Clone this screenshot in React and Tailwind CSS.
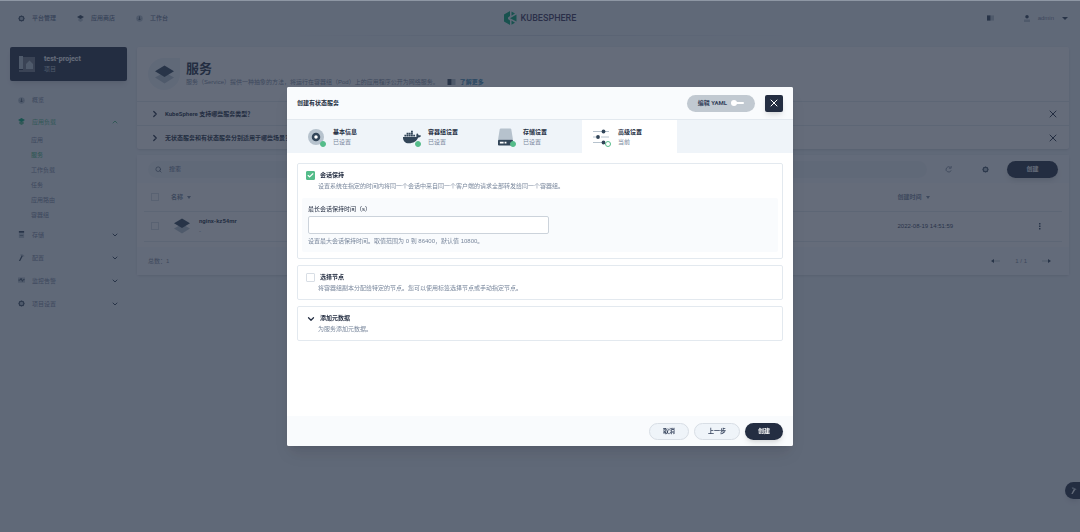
import { useState } from "react";
import { FaDocker } from "react-icons/fa";
import { Check, ChevronDown, ChevronRight, ChevronUp, Search, X } from "lucide-react";

function LayersIcon({ className }) {
  return (
    <svg viewBox="0 0 16 16" className={className} aria-hidden="true">
      <path d="M0 10.6 8 6l8 4.6-8 4.9z" fill="#b6c2cd" />
      <path d="M0 5.3 8 .5l8 4.8-8 4.7z" fill="#324558" />
    </svg>
  );
}

function GearIcon({ className }) {
  return (
    <svg viewBox="0 0 16 16" className={className} aria-hidden="true">
      <path
        d="M6.5 1h3l.5 1.9 1.7-.9 2.2 2.2-.9 1.7 2 .6v3l-2 .6.9 1.7-2.2 2.2-1.7-.9-.5 1.9h-3L6 13.1l-1.7.9-2.2-2.2.9-1.7-2-.6v-3l2-.6-.9-1.7L4.3 2l1.7.9z"
        fill="#324558"
      />
      <circle cx="8" cy="8" r="4" fill="#b6c2cd" />
    </svg>
  );
}

function StoreIcon({ className, active }) {
  return (
    <svg viewBox="0 0 16 16" className={className} aria-hidden="true">
      <path d="M3 8h10v5l-5 3-5-3z" fill={active ? "#55bc8a" : "#b6c2cd"} />
      <path d="M0 4.5 8 0l8 4.5L8 9z" fill={active ? "#00aa72" : "#324558"} />
    </svg>
  );
}

function DashboardIcon({ className }) {
  return (
    <svg viewBox="0 0 16 16" className={className} aria-hidden="true">
      <circle cx="8" cy="8" r="7.5" fill="#b6c2cd" />
      <path d="M8 3v8M5 8.5l3 3 3-3" stroke="#324558" strokeWidth="1.6" fill="none" />
    </svg>
  );
}

function StorageIcon({ className }) {
  return (
    <svg viewBox="0 0 16 16" className={className} aria-hidden="true">
      <path d="M2 5h12v11H2z" fill="#b6c2cd" />
      <path d="M2 0h12v4H2zM4 9h8v1H4z" fill="#324558" />
    </svg>
  );
}

function HammerIcon({ className }) {
  return (
    <svg viewBox="0 0 16 16" className={className} aria-hidden="true">
      <path d="M5 1c5-1 8 0 10 4l-2 1-3-2H6z" fill="#b6c2cd" />
      <path d="M8.500 3 11 4.500 5 16H2z" fill="#324558" />
    </svg>
  );
}

function MonitorIcon({ className }) {
  return (
    <svg viewBox="0 0 16 16" className={className} aria-hidden="true">
      <path d="M0 1h16v12H0z" fill="#b6c2cd" />
      <path d="M1 7h4l2-4 3 7 2-4h3" stroke="#324558" strokeWidth="2" fill="none" />
    </svg>
  );
}

function BookIcon({ className }) {
  return (
    <svg viewBox="0 0 16 12" className={className} aria-hidden="true">
      <path d="M8 0h8v12H8z" fill="#b6c2cd" />
      <path d="M0 0h8v12H0z" fill="#324558" />
    </svg>
  );
}

function ProjectIcon({ className }) {
  return (
    <svg viewBox="0 0 16 16" className={className} aria-hidden="true">
      <path d="M4 1h12v15H0v-2h4z" fill="#ffffff" opacity=".35" />
      <path d="M0 0h4v13H0zM7 8l3.500-3.500L14 8v5H7z" fill="#b6c2cd" />
    </svg>
  );
}

function DiscIcon({ className }) {
  return (
    <svg viewBox="0 0 16 16" className={className} aria-hidden="true">
      <circle cx="8" cy="8" r="8" fill="#b6c2cd" />
      <circle cx="8" cy="8" r="3" fill="#ffffff" stroke="#324558" strokeWidth="2.500" />
    </svg>
  );
}

function DiskIcon({ className }) {
  return (
    <svg viewBox="0 0 16 18" className={className} aria-hidden="true">
      <path d="M3 0h10q1 0 1.200 1L16 12H0L1.800 1Q2 0 3 0z" fill="#b6c2cd" />
      <path d="M1 12h14q1 0 1 1v4q0 1-1 1H1q-1 0-1-1v-4q0-1 1-1z" fill="#324558" />
      <path d="M2 14h4v2H2zM7 14h2v2H7z" fill="#ffffff" />
    </svg>
  );
}

function SlidersIcon({ className }) {
  return (
    <svg viewBox="0 0 16 16" className={className} aria-hidden="true">
      <path d="M0 2.500h16M0 8h6M8 8h8M0 13.500h11" stroke="#b6c2cd" strokeWidth="1" />
      <circle cx="10.500" cy="2.500" r="1.900" fill="#324558" />
      <circle cx="5" cy="8" r="1.900" fill="#324558" />
      <circle cx="10.500" cy="13.500" r="1.900" fill="#324558" />
    </svg>
  );
}

const topLinks = [
  { label: "平台管理", Icon: GearIcon },
  { label: "应用商店", Icon: StoreIcon },
  { label: "工作台", Icon: DashboardIcon },
];

const workloads = ["应用", "服务", "工作负载", "任务", "应用路由", "容器组"];

const groups = [
  { label: "存储", Icon: StorageIcon },
  { label: "配置", Icon: HammerIcon },
  { label: "监控告警", Icon: MonitorIcon },
  { label: "项目设置", Icon: GearIcon },
];

const steps = [
  { title: "基本信息", state: "已设置", Icon: DiscIcon, size: "size-4" },
  { title: "容器组设置", state: "已设置", Icon: FaDocker, size: "size-[18px]" },
  { title: "存储设置", state: "已设置", Icon: DiskIcon, size: "w-[15px] h-[18px]" },
  { title: "高级设置", state: "当前", Icon: SlidersIcon, size: "size-4", current: true },
];

function Header() {
  return (
    <header className="relative flex h-[36px] items-center justify-between pl-[18px] pr-3">
      <nav className="flex gap-[21px]">
        {topLinks.map(({ label, Icon }) => (
          <a key={label} href="#" className="flex items-center gap-[7px] font-medium text-[#5f708a]">
            <Icon className="size-[7px]" />
            {label}
          </a>
        ))}
      </nav>
      <a href="#" className="absolute inset-x-0 mx-auto flex w-fit items-center gap-1">
        <svg viewBox="0 0 26 28" className="h-[14px] w-[13px]" aria-hidden="true">
          <path d="M12 0v10L8 13v3l4 3v9L0 21V7z" fill="#00a971" />
          <path d="M15 1l7 4-7 4.500zM25 7v14L12 14.500zM15 19l7 4.500-7 4z" fill="#00a971" />
        </svg>
        <span className="font-[Roboto,sans-serif] text-[9px] leading-[14px] font-medium text-[#3b3559]">
          KUBESPHERE
        </span>
      </a>
      <div className="flex items-center gap-[30px]">
        <button aria-label="文档">
          <BookIcon className="h-[6px] w-[7px]" />
        </button>
        <button className="flex items-center gap-2">
          <svg viewBox="0 0 12 14" className="h-[7px] w-[6px]" aria-hidden="true">
            <circle cx="6" cy="3.500" r="3.500" fill="#324558" />
            <path d="M0 14V9h12v5z" fill="#b6c2cd" />
          </svg>
          <span>admin</span>
          <span className="border-x-[3px] border-t-[3px] border-x-transparent border-t-[#324558]" />
        </button>
      </div>
      <div className="absolute inset-x-[26%] bottom-0 h-px bg-linear-to-r from-transparent via-[#d4dde6] to-transparent" />
    </header>
  );
}

function Sidebar() {
  return (
    <aside className="w-[117px] shrink-0">
      <div className="flex h-[34px] items-center gap-[9px] rounded-xs bg-[#242e42] px-[9px] shadow-md">
        <ProjectIcon className="size-4" />
        <div className="text-[#b6c2cd]">
          <p className="font-[Roboto,sans-serif] text-[7px] leading-[10px] font-bold text-white">test-project</p>
          <p className="leading-[10px]">项目</p>
        </div>
      </div>
      <nav className="mt-[9px] px-2">
        <a href="#" className="flex h-5 items-center gap-[7px]">
          <DashboardIcon className="size-[7px]" />
          概览
        </a>
        <a href="#" className="flex h-[23px] items-center gap-[7px] text-[#55bc8a]">
          <StoreIcon className="size-[7px]" active />
          <span className="flex-1">应用负载</span>
          <ChevronUp className="size-2" strokeWidth={3} />
        </a>
        <ul>
          {workloads.map((name) => (
            <li key={name} className="pl-[13px] leading-[15px]">
              <a href="#" className={name === "服务" ? "font-medium text-[#55bc8a]" : ""}>
                {name}
              </a>
            </li>
          ))}
        </ul>
        {groups.map(({ label, Icon }) => (
          <a key={label} href="#" className="flex h-[23px] items-center gap-[7px]">
            <Icon className="size-[7px]" />
            <span className="flex-1">{label}</span>
            <ChevronDown className="size-2 text-[#324558]" strokeWidth={3} />
          </a>
        ))}
      </nav>
    </aside>
  );
}

function Tip({ children }) {
  return (
    <div className="flex h-6 items-center gap-[5px] border-t border-[#e3e9ef] pr-[10px] pl-[13px] font-[Roboto,'Noto_Sans_CJK_SC',sans-serif] font-bold text-[#242e42]">
      <ChevronRight className="size-[10px]" strokeWidth={3} />
      <span className="flex-1">{children}</span>
      <button aria-label="关闭">
        <X className="size-3" strokeWidth={2} />
      </button>
    </div>
  );
}

function Caret() {
  return (
    <span className="ml-1 inline-block border-x-2 border-t-[3px] border-x-transparent border-t-current align-middle" />
  );
}

function Services() {
  return (
    <main className="min-w-0 flex-1">
      <section className="rounded-xs bg-white shadow-sm">
        <div className="flex h-[54px] items-center gap-[6px] px-[11px]">
          <div className="flex size-8 items-center justify-center rounded-full rounded-tr-none bg-[#eff4f9]">
            <LayersIcon className="size-[19px]" />
          </div>
          <div>
            <h1 className="text-[13px] leading-4 font-bold text-[#242e42]">服务</h1>
            <p className="flex items-center leading-[10px]">
              服务（Service）提供一种抽象的方法，将运行在容器组（Pod）上的应用程序公开为网络服务。
              <BookIcon className="ml-2 h-[6px] w-[9px]" />
              <a href="#" className="ml-1 font-bold text-[#3385b0]">
                了解更多
              </a>
            </p>
          </div>
        </div>
        <Tip>KubeSphere 支持哪些服务类型？</Tip>
        <Tip>无状态服务和有状态服务分别适用于哪些场景？</Tip>
      </section>

      <section className="mt-[6px] rounded-xs bg-white shadow-sm">
        <div className="flex h-7 items-center bg-[#f9fbfd] px-[11px]">
          <label className="flex h-[17px] flex-1 items-center gap-[7px] rounded-full bg-[#eff4f9] px-[7px]">
            <Search className="size-[7px] text-[#324558]" />
            <input
              type="search"
              aria-label="搜索"
              placeholder="搜索"
              className="min-w-0 flex-1 placeholder:text-[#5f708a]"
            />
          </label>
          <button aria-label="刷新" className="ml-[18px]">
            <svg viewBox="0 0 16 16" className="size-[7px]" aria-hidden="true">
              <path d="M12 3a6 6 0 1 0 2 7M9 5h5V0" stroke="#79879c" strokeWidth="2" fill="none" />
            </svg>
          </button>
          <button aria-label="设置" className="ml-[30px]">
            <GearIcon className="size-[7px]" />
          </button>
          <button className="ml-[18px] h-[17px] w-[51px] rounded-full bg-[#242e42] font-bold text-white shadow-md">
            创建
          </button>
        </div>
        <div className="px-[7px] pb-[5px]">
          <table className="w-full table-fixed text-left">
            <thead>
              <tr className="h-7 border-b border-[#e3e9ef]">
                <th className="w-[27px] pl-[7px]">
                  <input
                    type="checkbox"
                    aria-label="全选"
                    className="block size-2 appearance-none border border-[#d8dee5]"
                  />
                </th>
                <th className="font-bold">
                  名称
                  <Caret />
                </th>
                <th className="w-[14%] font-bold">
                  创建时间
                  <Caret />
                </th>
                <th className="w-9" />
              </tr>
            </thead>
            <tbody>
              <tr className="h-[30px] border-b border-[#e3e9ef]">
                <td className="pl-[7px]">
                  <input
                    type="checkbox"
                    aria-label="nginx-kz54mr"
                    className="block size-2 appearance-none border border-[#d8dee5]"
                  />
                </td>
                <td>
                  <div className="flex items-center gap-[9px] pl-[3px]">
                    <LayersIcon className="size-4" />
                    <div>
                      <a
                        href="#"
                        className="block font-[Roboto,sans-serif] leading-[10px] font-bold text-[#242e42]"
                      >
                        nginx-kz54mr
                      </a>
                      <p className="leading-[10px]">-</p>
                    </div>
                  </div>
                </td>
                <td className="text-[#36435c]">2022-08-19 14:51:59</td>
                <td className="pl-[13px]">
                  <button aria-label="更多" className="block">
                    <svg viewBox="0 0 4 14" className="h-[7px] w-[2px]" fill="#324558" aria-hidden="true">
                      <path d="M0 0h3v3H0zM0 5h3v3H0zM0 10h3v3H0z" />
                    </svg>
                  </button>
                </td>
              </tr>
            </tbody>
          </table>
        </div>
        <div className="flex h-7 items-center justify-between bg-[#f9fbfd] pr-[18px] pl-[11px]">
          <span>总数：1</span>
          <div className="flex items-center gap-[15px]">
            <button aria-label="上一页">
              <svg viewBox="0 0 9 6" className="h-[6px] w-[9px]" aria-hidden="true">
                <path d="M3 2.500h6v1H3z" fill="#b6c2cd" />
                <path d="M0 3l3-2v4z" fill="#324558" />
              </svg>
            </button>
            <span>1 / 1</span>
            <button aria-label="下一页">
              <svg viewBox="0 0 9 6" className="h-[6px] w-[9px]" aria-hidden="true">
                <path d="M0 2.500h6v1H0z" fill="#b6c2cd" />
                <path d="M9 3 6 1v4z" fill="#324558" />
              </svg>
            </button>
          </div>
        </div>
      </section>
    </main>
  );
}

function CheckPanel({ id, title, desc, defaultChecked, children }) {
  const [checked, setChecked] = useState(!!defaultChecked);

  return (
    <section className="rounded-xs border border-[#e3e9ef] px-1 py-[6px]">
      <div className="flex gap-[5px] pl-1">
        <span className="relative mt-px block size-[9px]">
          <input
            id={id}
            type="checkbox"
            checked={checked}
            onChange={(e) => setChecked(e.target.checked)}
            className="block size-[9px] appearance-none rounded-[1px] border border-[#d8dee5] checked:border-[#55bc8a] checked:bg-[#55bc8a]"
          />
          {checked && (
            <Check className="pointer-events-none absolute inset-px size-[7px] text-white" strokeWidth={4} />
          )}
        </span>
        <label htmlFor={id} className="leading-[11px] font-bold text-[#242e42]">
          {title}
        </label>
      </div>
      <p className="pl-4 leading-[10px]">{desc}</p>
      {checked && children}
    </section>
  );
}

function CreateDialog() {
  return (
    <div className="fixed inset-0 flex items-center justify-center border-t border-[#8e97a4] bg-[#242e42]/70">
      <div
        role="dialog"
        aria-labelledby="dialog-title"
        className="flex w-full max-w-[506px] flex-col overflow-hidden rounded-xs bg-white shadow-lg"
      >
        <div className="flex h-8 items-center bg-[#f9fbfd] px-[10px]">
          <h2 id="dialog-title" className="flex-1 font-bold text-[#242e42]">
            创建有状态服务
          </h2>
          <button className="flex h-[17px] items-center gap-[3px] rounded-full bg-[#c1c9d1] px-[11px] font-[Roboto,'Noto_Sans_CJK_SC',sans-serif] font-bold text-[#36435c]">
            编辑 YAML
            <svg viewBox="0 0 14 6" className="h-[6px] w-[14px]" fill="#ffffff" aria-hidden="true">
              <circle cx="4" cy="3" r="3" />
              <rect x="4" y="2" width="10" height="2" rx="1" />
            </svg>
          </button>
          <button
            aria-label="关闭"
            className="ml-[10px] flex h-[17px] w-[18px] items-center justify-center rounded-xs bg-[#242e42] text-white shadow-md"
          >
            <X className="size-3" strokeWidth={2} />
          </button>
        </div>

        <ol className="flex h-[34px] border-t border-[#e3e9ef] bg-[#eff4f9] pl-[10px]">
          {steps.map(({ title, state, Icon, size, current }) => (
            <li key={title} className={`flex w-[95px] items-center pl-[11px] ${current ? "bg-white" : ""}`}>
              <span className="relative flex h-[18px] w-[25px] items-center">
                <Icon className={`${size} text-[#324558]`} />
                <span
                  className={`absolute right-[7px] -bottom-px size-[6px] rounded-full border border-[#55bc8a] ${
                    current ? "bg-white" : "bg-[#55bc8a]"
                  }`}
                />
              </span>
              <div>
                <p className="leading-[10px] font-bold text-[#242e42]">{title}</p>
                <p className="leading-[10px]">{state}</p>
              </div>
            </li>
          ))}
        </ol>

        <div className="flex min-h-[263px] flex-col gap-[6px] p-[10px]">
          <CheckPanel
            id="session"
            title="会话保持"
            desc="设置系统在指定的时间内将同一个会话中来自同一个客户端的请求全部转发给同一个容器组。"
            defaultChecked
          >
            <div className="mt-[7px] rounded-xs bg-[#f9fbfd] px-[6px] py-[6px]">
              <label htmlFor="timeout" className="block leading-[10px] text-[#242e42]">
                最长会话保持时间（s）
              </label>
              <input
                id="timeout"
                type="text"
                className="mt-[2px] block h-[18px] w-[52%] rounded-xs border border-[#ccd3db] bg-white px-1"
              />
              <p className="mt-[2px] leading-[10px]">设置最大会话保持时间。取值范围为 0 到 86400，默认值 10800。</p>
            </div>
          </CheckPanel>
          <CheckPanel
            id="nodes"
            title="选择节点"
            desc="将容器组副本分配给特定的节点。您可以使用标签选择节点或手动指定节点。"
          />
          <section className="rounded-xs border border-[#e3e9ef] px-1 py-[6px]">
            <button className="flex items-center gap-[4px] pl-[4px] leading-[11px] font-bold text-[#242e42]">
              <ChevronDown className="size-[10px]" strokeWidth={3} />
              添加元数据
            </button>
            <p className="pl-4 leading-[10px]">为服务添加元数据。</p>
          </section>
        </div>

        <div className="flex h-[30px] items-center justify-end gap-[5px] bg-[#f9fbfd] px-[10px] font-bold">
          <button className="h-[17px] rounded-full border border-[#d8dee5] bg-[#eff4f9] px-[13px] text-[#36435c]">
            取消
          </button>
          <button className="h-[17px] rounded-full border border-[#d8dee5] bg-[#eff4f9] px-[13px] text-[#36435c]">
            上一步
          </button>
          <button className="h-[17px] rounded-full bg-[#242e42] px-[13px] text-white shadow-md">创建</button>
        </div>
      </div>
    </div>
  );
}

export default function App() {
  return (
    <div className="min-h-screen bg-[#eff4f9] font-['Liberation_Sans','Noto_Sans_CJK_SC',sans-serif] text-[6px] leading-[10px] text-[#79879c]">
      <Header />
      <div className="flex gap-[10px] pt-[11px] pr-[11px] pl-[10px]">
        <Sidebar />
        <Services />
      </div>
      <button
        aria-label="工具箱"
        className="fixed right-0 bottom-[33px] flex h-[17px] w-[15px] items-center rounded-l-full bg-[#242e42] pl-[5px] shadow-md"
      >
        <svg viewBox="0 0 16 16" className="size-[7px]" aria-hidden="true">
          <path d="M4 1c4 0 8 1 11 5l-2 1-3-3H5z" fill="#b6c2cd" />
          <path d="M9 4l3 2-6 10H3z" fill="#ffffff" />
        </svg>
      </button>
      <CreateDialog />
    </div>
  );
}
